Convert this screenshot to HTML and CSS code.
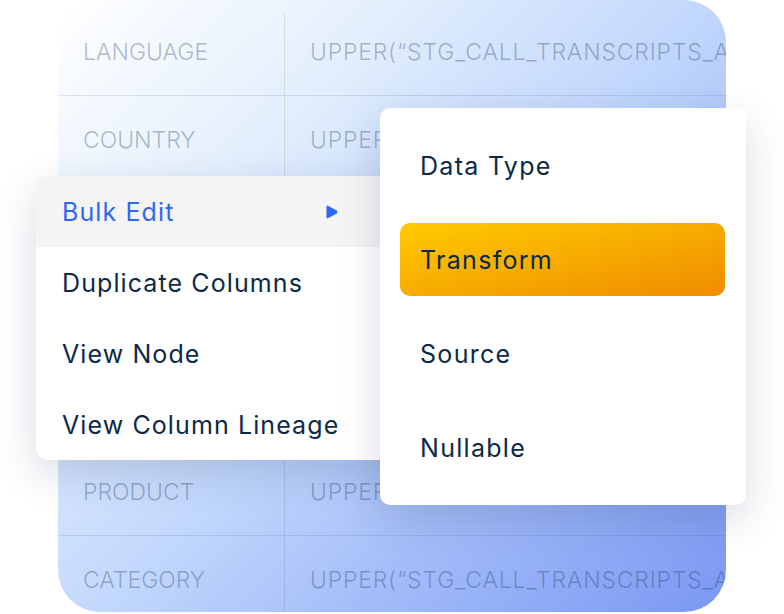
FILE: index.html
```html
<!DOCTYPE html>
<html>
<head>
    <title>Column Menu</title>
    <link rel="stylesheet" href="styles.css">
</head>
<body>
    <div class="scene">
        <div class="table-card">
            <div class="grid-row"><div class="cell name">LANGUAGE</div><div class="cell expr">UPPER(“STG_CALL_TRANSCRIPTS_A</div></div>
            <div class="grid-row"><div class="cell name">COUNTRY</div><div class="cell expr">UPPER(“STG_CALL_TRANSCRIPTS_A</div></div>
            <div class="grid-row"><div class="cell name">REGION</div><div class="cell expr">UPPER(“STG_CALL_TRANSCRIPTS_A</div></div>
            <div class="grid-row"><div class="cell name">CHANNEL</div><div class="cell expr">UPPER(“STG_CALL_TRANSCRIPTS_A</div></div>
            <div class="grid-row"><div class="cell name">AGENT</div><div class="cell expr">UPPER(“STG_CALL_TRANSCRIPTS_A</div></div>
            <div class="grid-row"><div class="cell name">PRODUCT</div><div class="cell expr">UPPER(“STG_CALL_TRANSCRIPTS_A</div></div>
            <div class="grid-row"><div class="cell name">CATEGORY</div><div class="cell expr">UPPER(“STG_CALL_TRANSCRIPTS_A</div></div>
        </div>

        <div class="context-menu">
            <div class="menu-item active">
                <span class="label">Bulk Edit</span>
                <svg class="caret" width="12" height="14" viewBox="0 0 12 14">
                    <path d="M0.5 2 Q0.5 0 2.4 0.9 L10.8 5.6 Q12 7 10.8 8.4 L2.4 13.1 Q0.5 14 0.5 12 Z" fill="#2f66f6"/>
                </svg>
            </div>
            <div class="menu-item"><span class="label">Duplicate Columns</span></div>
            <div class="menu-item"><span class="label">View Node</span></div>
            <div class="menu-item"><span class="label">View Column Lineage</span></div>
        </div>

        <div class="sub-menu">
            <div class="sub-item">Data Type</div>
            <div class="sub-item selected">Transform</div>
            <div class="sub-item">Source</div>
            <div class="sub-item">Nullable</div>
        </div>
    </div>
</body>
</html>
```

FILE: styles.css
```css
:root {
    --text-dark: #0b2948;
    --accent: #2f66f6;
    --cell-text: rgba(30, 60, 100, 0.35);
    --cell-line: rgba(30, 60, 100, 0.12);
}

body {
    margin: 0;
    background: #ffffff;
    font-family: Inter, "Noto Sans", sans-serif;
    overflow: hidden;
}

.scene {
    position: relative;
    width: 784px;
    height: 614px;
    overflow: hidden;
}

/* background table */
.table-card {
    margin-left: 58px;
    width: 668px;
    height: 612px;
    padding-top: 8px;
    box-sizing: border-box;
    border-radius: 42px;
    overflow: hidden;
    background: linear-gradient(135deg, #ffffff 0%, #e4effd 26%, #c0d6fc 52%, #9cb6f8 76%, #7a97f2 100%);
}

.grid-row {
    display: grid;
    grid-template-columns: 227px 1fr;
    height: 88px;
    border-bottom: 1.5px solid var(--cell-line);
    box-sizing: border-box;
}

.grid-row:first-child .name {
    border-image: linear-gradient(to bottom, transparent 6px, var(--cell-line) 6px) 1;
}

.cell {
    display: flex;
    align-items: center;
    font-size: 23px;
    font-weight: 300;
    color: var(--cell-text);
    white-space: nowrap;
    overflow: hidden;
}

.name {
    padding-left: 25px;
    border-right: 1.5px solid var(--cell-line);
}

.expr {
    padding-left: 25px;
    letter-spacing: 0.8px;
}

/* left context menu */
.context-menu {
    position: absolute;
    left: 36px;
    top: 176px;
    width: 370px;
    background: #ffffff;
    border-radius: 12px;
    overflow: hidden;
    box-shadow: 0 14px 40px rgba(20, 40, 80, 0.16);
}

.menu-item {
    display: flex;
    align-items: center;
    height: 71px;
    padding: 0 68px 0 26px;
    font-size: 25px;
    letter-spacing: 1.1px;
    color: var(--text-dark);
}

.menu-item .label {
    flex: 1;
    white-space: nowrap;
}

.menu-item.active {
    background: #f4f4f4;
    color: var(--accent);
}

.caret {
    display: block;
    flex-shrink: 0;
}

/* right sub menu */
.sub-menu {
    position: absolute;
    left: 380px;
    top: 108px;
    width: 366px;
    box-sizing: border-box;
    padding: 21px 21px 21px 20px;
    display: flex;
    flex-direction: column;
    gap: 21px;
    background: #ffffff;
    border-radius: 10px;
    box-shadow: 0 14px 40px rgba(20, 40, 80, 0.16);
}

.sub-item {
    display: flex;
    align-items: center;
    height: 73px;
    padding-left: 20px;
    border-radius: 10px;
    font-size: 25px;
    letter-spacing: 1.3px;
    color: var(--text-dark);
}

.sub-item.selected {
    background: linear-gradient(to bottom right, #ffcb00, #ef8c00);
}
```
